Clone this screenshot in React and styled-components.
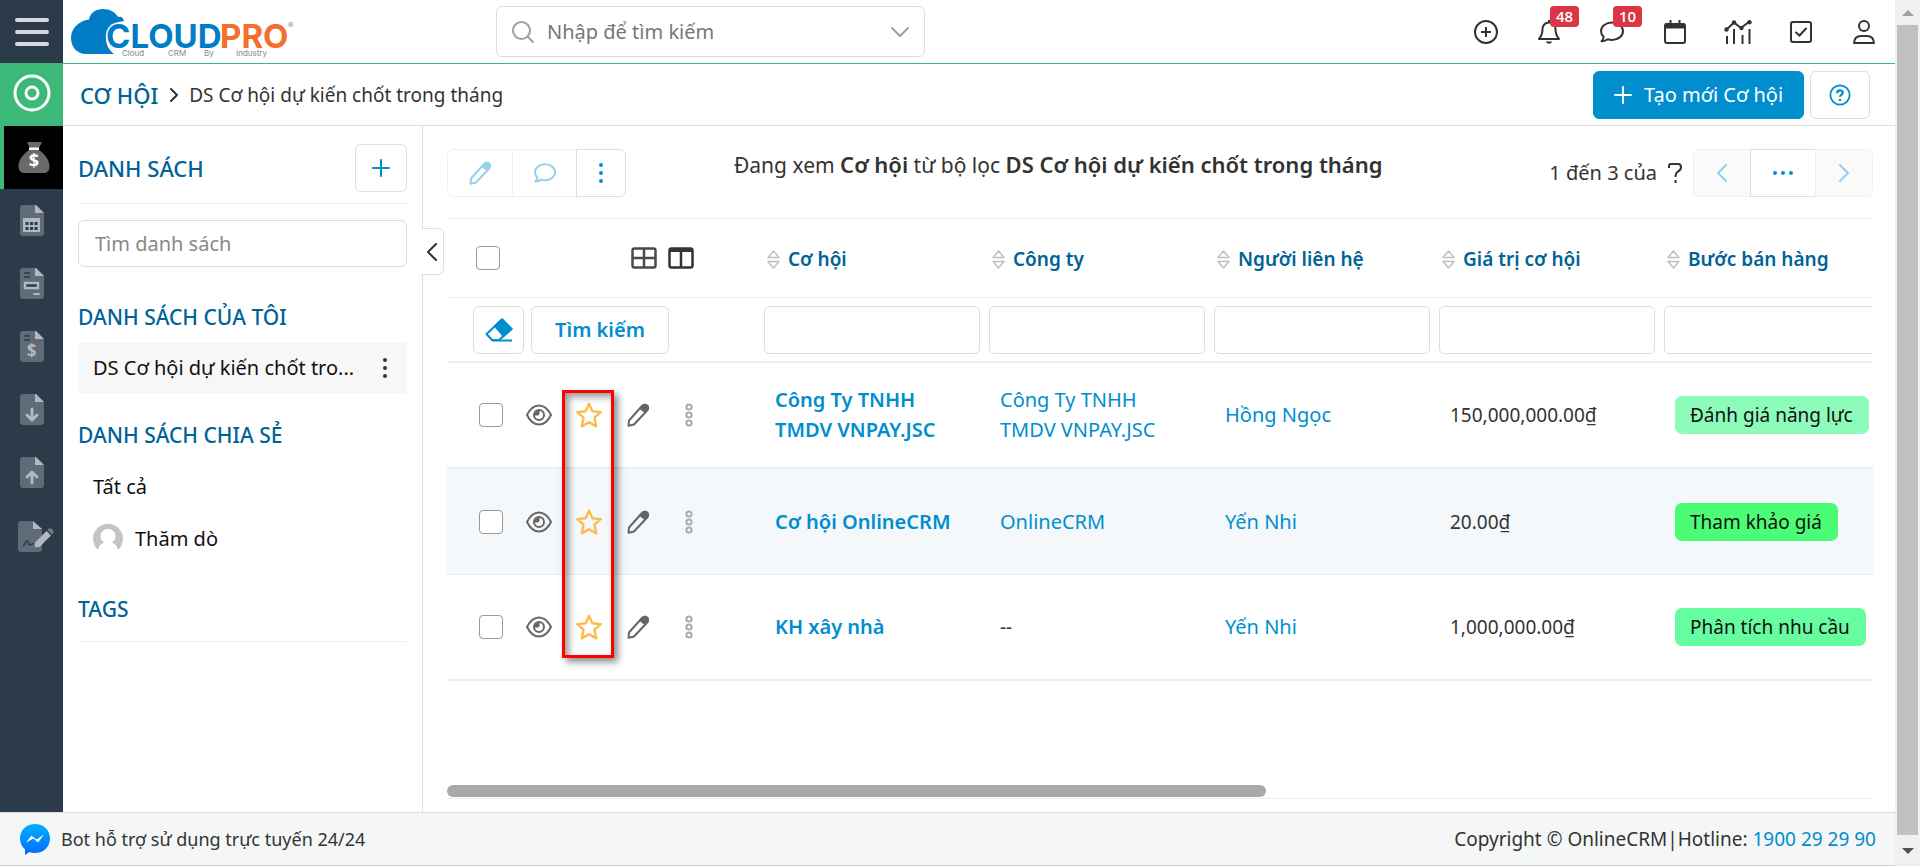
import React from 'react';
import styled, { createGlobalStyle, css } from 'styled-components';

const c = {
  blue: '#008ecf', navy: '#006296', text: '#333', line: '#ddd', soft: '#eee',
  green: '#3cb878', side: '#2c3b49', muted: '#888',
};

const Global = createGlobalStyle`
  *, *::before, *::after { box-sizing: border-box; }
  body { margin: 0; background: #fff; color: ${c.text}; font: 400 19px/30px "Noto Sans", "Open Sans", sans-serif; }
  button, input { font: inherit; color: inherit; margin: 0; }
  button { cursor: pointer; padding: 0; }
  a { text-decoration: none; color: ${c.blue}; }
  svg { display: block; flex: none; }
`;

const Window = styled.div`display: grid; grid-template-columns: minmax(0, 1fr) 25px; min-height: 100vh;`;
const Page = styled.div`display: flex; flex-direction: column; min-width: 0;`;
const Body = styled.div`display: flex; flex: 1; min-width: 0;`;
const Column = styled.div`display: flex; flex-direction: column; flex: 1; min-width: 0;`;

/* module rail */
const Rail = styled.nav`width: 63px; flex: none; background: ${c.side}; display: flex; flex-direction: column;`;
const RailButton = styled.button`
  height: 63px; border: 0; width: 100%; display: flex; align-items: center; justify-content: center;
  background: ${p => p.$bg || 'transparent'};
  ${p => p.$raised && css`padding-bottom: 4px;`}
  ${p => p.$wide && css`padding-left: 8px;`}
  ${p => p.$active && css`border-left: 4px solid ${c.green};`}
`;

/* top bar */
const Topbar = styled.header`height: 64px; flex: none; display: flex; align-items: center; border-bottom: 1px solid ${c.green};`;
const Brand = styled.a`width: 433px; padding-left: 7px;`;
const SearchBox = styled.label`
  width: 429px; height: 51px; border: 1px solid ${c.line}; border-radius: 6px; display: flex; align-items: center;
  gap: 12px; padding: 0 14px; color: #a0a0a0;
`;
const SearchInput = styled.input`
  flex: 1; min-width: 0; border: 0; outline: 0; background: none; padding: 0; font-size: 20px;
  &::placeholder { color: #777; opacity: 1; }
`;
const TopActions = styled.div`display: flex; margin-left: auto;`;
const TopButton = styled.button`
  position: relative; width: 63px; height: 63px; border: 0; background: none; color: ${c.text};
  display: flex; align-items: center; justify-content: center;
`;
const Badge = styled.span`
  position: absolute; top: 6px; left: 33px; min-width: 29px; height: 21px; border-radius: 4px; background: #dc3545; color: #fff;
  font: 600 15px/20px "Open Sans", sans-serif; text-align: center;
`;

/* breadcrumb */
const CrumbBar = styled.div`
  height: 62px; flex: none; display: flex; align-items: center; border-bottom: 1px solid ${c.line}; padding: 0 25px 0 17px;
`;
const CrumbModule = styled.h1`margin: 0; font-size: 22px; font-weight: 500; color: ${c.navy};`;
const CrumbArrow = styled.span`margin: 0 10px 0 11px;`;
const CrumbActions = styled.div`display: flex; gap: 6px; margin-left: auto;`;
const Button = styled.button`
  height: 48px; width: ${p => p.$w}px; border-radius: 6px; border: 1px solid ${c.line}; background: #fff; color: ${c.blue};
  display: flex; align-items: center; justify-content: center; gap: 12px; font-weight: ${p => p.$weight || 400}; font-size: 20px;
  ${p => p.$primary && css`background: ${c.blue}; border-color: ${c.blue}; color: #fff;`}
`;

/* list panel */
const Content = styled.div`display: flex; flex: 1; min-width: 0;`;
const Lists = styled.aside`
  position: relative; width: 360px; flex: none; border-right: 1px solid ${c.line}; padding: 18px 15px 16px; font-size: 20px;
`;
const ListsHead = styled.div`
  display: flex; align-items: center; justify-content: space-between; height: 60px; padding-bottom: 11px; border-bottom: 1px solid ${c.soft};
`;
const PanelTitle = styled.h2`margin: 0; font-size: 22px; font-weight: 500; color: ${c.navy};`;
const ListSearch = styled.input`
  display: block; width: 100%; height: 47px; margin-top: 16px; border: 1px solid ${c.line}; border-radius: 6px; padding: 0 16px;
  &::placeholder { color: #888; opacity: 1; }
`;
const GroupTitle = styled.h3`
  margin: ${p => p.$top || 34}px 0 0; font-size: 21px; line-height: 32px; font-weight: 500; color: ${c.navy};
  ${p => p.$ruled && css`padding-bottom: 16px; border-bottom: 1px solid ${c.soft};`}
`;
const ListLinks = styled.ul`list-style: none; margin: ${p => p.$top}px 0 0; padding: 0;`;
const ListRow = styled.li`
  display: flex; align-items: center; height: ${p => p.$h}px; padding: 0 14px 0 15px; background: ${p => (p.$on ? '#f7f7f7' : 'none')};
`;
const ListLink = styled.a`color: #111; white-space: nowrap;`;
const PlainButton = styled.button`
  border: 0; background: none; min-width: 16px; margin-left: ${p => (p.$push ? 'auto' : 0)}; color: ${p => p.$color || c.text};
  display: flex; align-items: center; justify-content: center;
`;
const Avatar = styled.span`margin-right: 12px;`;
const Collapse = styled.button`
  position: absolute; left: 359px; top: 102px; width: 22px; height: 47px; padding-right: 2px; background: #fff; border: 1px solid ${c.line}; border-left: 0;
  border-radius: 0 6px 6px 0; display: flex; align-items: center; justify-content: center;
`;

/* record list */
const Main = styled.main`flex: 1; min-width: 0; padding: 23px 22px 13px 24px; display: flex; flex-direction: column;`;
const Toolbar = styled.div`display: flex; align-items: flex-start; height: 69px;`;
const Group = styled.div`display: flex; height: 48px;`;
const GroupButton = styled.button`
  width: ${p => p.$w}px; height: 48px; background: ${p => p.$bg || '#fff'}; color: ${c.blue}; display: flex; align-items: center; justify-content: center;
  border: 1px solid ${p => (p.disabled ? '#f0f0f0' : c.line)};
  & + & { margin-left: -1px; }
  &:first-child { border-radius: 6px 0 0 6px; }
  &:last-child { border-radius: 0 6px 6px 0; }
  svg { opacity: ${p => (p.disabled ? 0.4 : 1)}; }
`;
const ViewTitle = styled.p`
  margin: 0 0 0 108px; flex: 1; line-height: 30px; font-size: 21px; white-space: nowrap;
  b { font-weight: 600; font-size: 22px; }
`;
const Pager = styled.div`display: flex; gap: 11px;`;
const Count = styled.span`font-size: 20px; line-height: 48px; display: flex; gap: 11px; align-items: center; white-space: nowrap;`;

const TableArea = styled.div`position: relative; overflow: hidden; border-top: 1px solid ${c.soft};`;
const Table = styled.table`width: 1437px; table-layout: fixed; border-collapse: separate; border-spacing: 0;`;
const HeadCell = styled.th`height: 79px; padding: 0 8px; text-align: left; border-bottom: 1px solid ${c.soft}; font-weight: 600; color: ${c.navy};`;
const FilterCell = styled.td`height: 65px; padding: 0 4px 0 5px; border-bottom: 2px solid ${c.soft};`;
const Row = styled.tr`background: ${p => (p.$on ? '#f4f8fb' : '#fff')};`;
const Cell = styled.td`
  height: 106px; padding: 0 16px; border-bottom: ${p => (p.$on ? 1 : 2)}px solid ${c.soft};
  a { display: block; width: 180px; font-size: 20px; font-weight: ${p => (p.$strong ? 600 : 400)}; }
`;
const Sort = styled.button`
  border: 0; background: none; display: flex; align-items: center; gap: 8px; margin-top: 2px; font-weight: 600; font-size: 19px;
  line-height: 30px; white-space: nowrap;
`;
const Tools = styled.div`display: flex; align-items: center; padding-left: ${p => p.$left}px; gap: ${p => p.$gap || 0}px;`;
const Check = styled.input`
  appearance: none; width: 24px; height: 24px; border: 1px solid #999; border-radius: 4px; background: #fff; flex: none;
  &:checked { background: ${c.blue}; }
`;
const HeadIcons = styled.span`display: flex; gap: 11px; margin-left: 131px; color: ${c.text};`;
const RowIcon = styled(PlainButton)`width: ${p => p.$w}px; height: 30px;`;
const FilterInput = styled.input`display: block; width: 100%; height: 48px; border: 1px solid ${c.line}; border-radius: 5px; padding: 0 10px;`;
const Stage = styled.span`
  display: inline-block; height: 38px; line-height: 38px; padding: 0 16px 0 15px; border-radius: 7px; white-space: nowrap;
  color: #111; background: ${p => p.$bg};
`;
const Highlight = styled.div`
  position: absolute; left: 115px; top: 171px; width: 52px; height: 268px; border: 3px solid #f00; pointer-events: none;
  box-shadow: 4px 4px 7px rgba(0,0,0,.45), inset 4px 4px 7px rgba(0,0,0,.4);
`;
const Track = styled.div`margin-top: auto; padding-bottom: 1px; border-bottom: 1px solid ${c.soft};`;
const Thumb = styled.div`width: 57.4%; height: 12px; border-radius: 6px; background: #a9a9a9;`;

/* footer and window scroll bar */
const Footer = styled.footer`
  height: 54px; flex: none; background: #f5f7f7; border-top: 1px solid ${c.line}; border-bottom: 1px solid #d0d0d0;
  display: flex; align-items: center; padding: 0 19px 0 20px; gap: 11px; font-size: 18px;
`;
const Copyright = styled.span`margin-left: auto; font-size: 19px;`;
const WinScroll = styled.div`
  background: #f0f0f0; padding: 0 2px; display: flex; flex-direction: column; align-items: center; color: #a0a0a0;
`;
const WinArrow = styled.div`height: ${p => p.$h}px; display: flex; align-items: center; justify-content: center; color: ${p => p.$color};`;
const WinThumb = styled.div`flex: 1; width: 100%; background: #c1c1c1;`;

/* icons */
const Svg = ({ w = 24, h = w, vb = '0 0 24 24', sw = 2, fill = 'none', children, ...rest }) => (
  <svg width={w} height={h} viewBox={vb} fill={fill} stroke="currentColor" strokeWidth={sw} aria-hidden="true" {...rest}>{children}</svg>
);
const Plus = ({ s = 18, sw = 2 }) => <Svg w={s} vb="0 0 18 18" sw={sw} strokeLinecap="round"><path d="M9 1v16M1 9h16" /></Svg>;
const Chevron = ({ d, w = 12, h = 20, sw = 2 }) => <Svg w={w} h={h} vb={`0 0 ${w} ${h}`} sw={sw} strokeLinecap="round" strokeLinejoin="round"><path d={d} /></Svg>;
const Dots = ({ across }) => (
  <Svg w={across ? 22 : 6} h={across ? 6 : 22} vb={across ? '0 0 22 6' : '0 0 6 22'} fill="currentColor" sw={0}>
    {[3, 11, 19].map(n => <circle key={n} cx={across ? n : 3} cy={across ? 3 : n} r="2" />)}
  </Svg>
);
const Bubble = ({ s = 24 }) => (
  <Svg w={s} sw={s < 24 ? 2.2 : 2} strokeLinejoin="round"><path d="M12 2.500c6.100 0 11 3.800 11 8.700s-4.900 8.700-11 8.700c-1.600 0-3-.2-4.300-.7C6 20.400 4 21.300 1.500 21.300c1-1 2-2.700 2.200-4.500C2 15.300 1 13.300 1 11.200c0-4.900 4.900-8.700 11-8.700z" /></Svg>
);
const Pencil = () => (
  <Svg w={22} h={24} vb="0 0 22 24" strokeLinejoin="round">
    <path d="M2 17.500 15 3c1.500-1.600 4-1.500 5.200-.3 1.200 1.300 1 3.500-.3 5L7 21.500l-5.500 1.300z" />
    <path d="M13.500 5.500 16 2.500c3-2 6 1 4.500 4L18 9z" fill="currentColor" />
  </Svg>
);
const Eye = () => (
  <Svg w={26} h={22} vb="0 0 26 22" sw={2}>
    <path d="M1 11C4 5 8 1.500 13 1.500S22 5 25 11c-3 6-7 9.500-12 9.500S4 17 1 11z" />
    <circle cx="13" cy="11" r="5" /><path d="M13.500 6.500v3c0 1.300-.8 2-2 2h-3c0-3 2-5 5-5z" fill="currentColor" stroke="none" />
  </Svg>
);
const Star = () => <Svg w={26} h={26} sw={2.2} strokeLinejoin="round"><path d="m12 1.500 3.100 7 7.700.8-5.800 5.100 1.700 8.100L12 18.700l-6.700 3.800L7 14.400 1.200 9.300l7.700-.8z" /></Svg>;
const Rings = () => <Svg w={8} h={24} vb="0 0 8 24" sw={2}>{[4, 12, 20].map(y => <circle key={y} cx="4" cy={y} r="2.600" />)}</Svg>;
const SortIcon = () => <Svg w={13} h={19} vb="0 0 13 19" sw={1.5} stroke="#c0c0c0" strokeLinejoin="round"><path d="M1 7.500h11L6.500 1zM1 11.500h11L6.500 18z" /></Svg>;

const TopIcons = [
  ['Tạo nhanh', null, <Svg w={24}><circle cx="12" cy="12" r="11" /><path d="M12 7v10M7 12h10" /></Svg>],
  ['Thông báo', '48', <Svg w={22} h={24} vb="0 0 22 24" strokeLinejoin="round"><path d="M11 2.500c-4 0-6.500 3-6.500 6.500 0 5-1 7-3.500 10h20c-2.500-3-3.500-5-3.500-10 0-3.500-2.500-6.500-6.500-6.500zM11 0v3" /><path d="M8 21.500h6c-.5 3-5.500 3-6 0z" fill="currentColor" stroke="none" /></Svg>],
  ['Tin nhắn', '10', <Bubble />],
  ['Lịch', null, <Svg w={22} h={24} vb="0 0 22 24"><rect x="1" y="4" width="20" height="19" rx="2" /><path d="M1 3.500h20v5H1z" fill="currentColor" stroke="none" /><path d="M6.500 0v5M15.500 0v5" /></Svg>],
  ['Báo cáo', null, <Svg w={28} h={24} vb="0 0 28 24"><path d="M2.500 9.500 10 2.500l7 5.500 9-7M3 16v8M10 9v15M18.500 15v9M25.500 9v15" /><g fill="currentColor" stroke="none"><circle cx="2.500" cy="9.500" r="2.200" /><circle cx="10" cy="2.500" r="2.200" /><circle cx="17.500" cy="8" r="2.200" /><circle cx="25.500" cy="2.200" r="2.200" /></g></Svg>],
  ['Công việc', null, <Svg w={22} vb="0 0 22 22"><rect x="1" y="1" width="20" height="20" rx="2" /><path d="m5.500 11 4 3.500 7-7.500" /></Svg>],
  ['Tài khoản', null, <Svg w={22} h={24} vb="0 0 22 24"><circle cx="11" cy="6" r="5" /><path d="M1 23c.3-4.500 3-7 7-7h6c4 0 6.700 2.500 7 7z" strokeLinejoin="round" /></Svg>],
];

const Doc = ({ children, lines }) => (
  <svg width="24" height="31" viewBox="0 0 24 31" aria-hidden="true">
    <path d="M3 0h13l8 8v20a3 3 0 0 1-3 3H3a3 3 0 0 1-3-3V3a3 3 0 0 1 3-3z" fill="#5f6b76" />
    <path d="M15 0h1l8 8h-9z" fill="#b2b8be" />
    {lines && <path d="M4 5h6M4 9h6" stroke={c.side} strokeWidth="1.500" />}
    <g fill="none" stroke="#b2b8be" strokeWidth="3" strokeLinecap="round" strokeLinejoin="round">{children}</g>
  </svg>
);
const dollar = { fontFamily: '"Open Sans", sans-serif', fontWeight: 700, textAnchor: 'middle', stroke: 'none' };
const RailIcons = [
  ['Báo giá', <Doc><path d="M3 13h17v14H3z" fill="#b2b8be" stroke="none" /><path d="M5.500 18.500h12M5.500 23.500h12" stroke={c.side} strokeLinecap="butt" strokeDasharray="3 1.500" /></Doc>],
  ['Đơn hàng', <Doc lines><path d="M5 15h13v5H5z" strokeWidth="2.500" strokeLinejoin="miter" fill={c.side} /><path d="M14 26h5" strokeWidth="2" /></Doc>],
  ['Hóa đơn', <Doc lines><text x="11.500" y="26" fontSize="17" fill="#b2b8be" {...dollar}>$</text></Doc>],
  ['Nhập kho', <Doc><path d="M12 15v11M7 21l5 5 5-5" /></Doc>],
  ['Xuất kho', <Doc><path d="M12 26V15M7 20l5-5 5 5" /></Doc>],
  ['Hợp đồng', (
    <svg width="36" height="32" viewBox="0 0 36 32" aria-hidden="true">
      <path d="M3 1h12l9 8v20a3 3 0 0 1-3 3H3a3 3 0 0 1-3-3V4a3 3 0 0 1 3-3z" fill="#5f6b76" /><path d="M15 1l9 8h-9z" fill="#b2b8be" />
      <path d="M5 26c2 0 2-5 4-5s1 4 3 4 2-2 4-1" fill="none" stroke={c.side} strokeWidth="1.500" />
      <path d="M17 22.500 28.500 11l4.500 4.500L22 26.500c-1.500 1-3.500 1-5 .5-.5-1.500-.5-3 0-4.500z" fill="#b2b8be" /><path d="m29.500 10 1.500-1.500c2-1 5.500 2 4.500 4.500L34 14.500z" fill="#6d7882" />
    </svg>), true],
];

const columns = ['Cơ hội', 'Công ty', 'Người liên hệ', 'Giá trị cơ hội', 'Bước bán hàng'];
const records = [
  ['Công Ty TNHH TMDV VNPAY.JSC', 'Công Ty TNHH TMDV VNPAY.JSC', 'Hồng Ngọc', '150,000,000.00₫', 'Đánh giá năng lực', '#8dfbb9'],
  ['Cơ hội OnlineCRM', 'OnlineCRM', 'Yến Nhi', '20.00₫', 'Tham khảo giá', '#4bfd75'],
  ['KH xây nhà', null, 'Yến Nhi', '1,000,000.00₫', 'Phân tích nhu cầu', '#66fca0'],
];

const Logo = () => (
  <svg width="226" height="54" viewBox="0 0 226 54" role="img" aria-label="CloudPro">
    <path d="M16 49C7 49 1 42 1 33S8 16 19 14.500C20 8 26 4 33 4c7 0 12 3 15 8 3-1 5 0 6 4-11 1-18 8-18 17 0 7 3 12 8 16z" fill="#007dc5" />
    <g fontFamily="Inter, sans-serif" fontWeight="700" fontSize="33">
      <text x="36" y="43" fill="#007dc5" stroke="#fff" strokeWidth="3" paintOrder="stroke">CLOUD</text>
      <text x="150" y="43" fill="#f36f2b">PRO</text>
    </g>
    <g fontFamily="Inter, sans-serif" fontSize="8" fill="#888">
      <text y="51"><tspan x="52">Cloud</tspan><tspan x="98">CRM</tspan><tspan x="134">By</tspan><tspan x="166">Industry</tspan></text>
      <text x="218" y="23">®</text>
    </g>
  </svg>
);

export default function App() {
  return (
    <>
      <Global />
      <Window>
        <Page>
          <Body>
            <Rail aria-label="Phân hệ">
              <RailButton aria-label="Menu"><Svg w={34} h={28} vb="0 0 34 28" sw={4} stroke="#d5d8db" strokeLinecap="round"><path d="M2 2h30M2 14h30M2 26h30" /></Svg></RailButton>
              <RailButton $bg={c.green} $raised aria-label="Bán hàng"><Svg w={38} vb="0 0 38 38" sw={3} stroke="#fff"><circle cx="19" cy="19" r="17" /><circle cx="19" cy="19" r="6" /></Svg></RailButton>
              <RailButton $bg="#000" $active aria-label="Cơ hội">
                <svg width="32" height="31" viewBox="0 0 32 31" aria-hidden="true">
                  <path d="M9 0h15l-3 6h-9zM11 8h10c6 4 11 11 10.500 17-.3 4-2.500 6-6 6h-19C3 31 1 29 .5 25 0 19 5 12 11 8z" fill="#6a6a6a" />
                  <path d="M11 5.500h10v2.500H11z" fill="#fff" /><text x="16" y="25" fontSize="18" fill="#fff" {...dollar}>$</text>
                </svg>
              </RailButton>
              {RailIcons.map(([label, icon, wide]) => <RailButton key={label} $wide={wide} aria-label={label}>{icon}</RailButton>)}
            </Rail>
            <Column>
              <Topbar>
                <Brand href="#"><Logo /></Brand>
                <SearchBox>
                  <Svg w={24}><circle cx="10.500" cy="10.500" r="8.500" /><path d="m16.500 16.500 6 6" /></Svg>
                  <SearchInput placeholder="Nhập để tìm kiếm" aria-label="Tìm kiếm" />
                  <Chevron w={20} h={12} sw={2} d="M2 2l8 8 8-8" />
                </SearchBox>
                <TopActions>
                  {TopIcons.map(([label, badge, icon]) => (
                    <TopButton key={label} aria-label={label}>{icon}{badge && <Badge>{badge}</Badge>}</TopButton>
                  ))}
                </TopActions>
              </Topbar>
              <CrumbBar>
                <CrumbModule>CƠ HỘI</CrumbModule>
                <CrumbArrow><Chevron w={10} h={14} d="M2 1l6 6-6 6" /></CrumbArrow>
                <span>DS Cơ hội dự kiến chốt trong tháng</span>
                <CrumbActions>
                  <Button $w={211} $primary><Plus />Tạo mới Cơ hội</Button>
                  <Button $w={60} aria-label="Trợ giúp"><Svg w={22}><circle cx="12" cy="12" r="10.500" /><path d="M9 10c0-4 6-4 6-.5 0 2-3 2.500-3 4.500M12 16v2.500" strokeWidth="2.500" /></Svg></Button>
                </CrumbActions>
              </CrumbBar>
              <Content>
                <Lists>
                  <ListsHead><PanelTitle>DANH SÁCH</PanelTitle><Button $w={52} aria-label="Thêm danh sách"><Plus /></Button></ListsHead>
                  <ListSearch placeholder="Tìm danh sách" aria-label="Tìm danh sách" />
                  <GroupTitle>DANH SÁCH CỦA TÔI</GroupTitle>
                  <ListLinks $top={10}>
                    <ListRow $h={50} $on><ListLink href="#">DS Cơ hội dự kiến chốt tro...</ListLink><PlainButton $push aria-label="Thao tác"><Dots /></PlainButton></ListRow>
                  </ListLinks>
                  <GroupTitle $top={26}>DANH SÁCH CHIA SẺ</GroupTitle>
                  <ListLinks $top={10}>
                    <ListRow $h={52}><ListLink href="#">Tất cả</ListLink></ListRow>
                    <ListRow $h={52}>
                      <Avatar><svg width="30" height="30" viewBox="0 0 30 30" aria-hidden="true"><path d="M5 26a15 15 0 1 1 20 0c-.5-4-3-6-6-7.500a7.500 7.500 0 1 0-8 0C8 20 5.500 22 5 26z" fill="#c4c4c4" /></svg></Avatar>
                      <ListLink href="#">Thăm dò</ListLink>
                    </ListRow>
                  </ListLinks>
                  <GroupTitle $top={28} $ruled>TAGS</GroupTitle>
                  <Collapse aria-label="Thu gọn"><Chevron w={12} h={20} d="M10 2L2 10l8 8" /></Collapse>
                </Lists>
                <Main>
                  <Toolbar>
                    <Group>
                      <GroupButton $w={66} disabled aria-label="Sửa"><Pencil /></GroupButton>
                      <GroupButton $w={65} disabled aria-label="Bình luận"><Bubble s={22} /></GroupButton>
                      <GroupButton $w={50} aria-label="Thêm"><Dots /></GroupButton>
                    </Group>
                    <ViewTitle>Đang xem <b>Cơ hội</b> từ bộ lọc <b>DS Cơ hội dự kiến chốt trong tháng</b></ViewTitle>
                    <Pager>
                      <Count>1 đến 3 của <Svg w={14} h={20} vb="0 0 14 20"><path d="M1 5V3q0-2 2-2h7q3 0 3 3 0 3-3 4.500-2.500 1.500-2.500 5.500M7.500 17v3" /></Svg></Count>
                      <Group>
                        <GroupButton $w={58} $bg="#fafafa" disabled aria-label="Trang trước"><Chevron d="M10 2L2 10l8 8" /></GroupButton>
                        <GroupButton $w={66} aria-label="Chọn trang"><Dots across /></GroupButton>
                        <GroupButton $w={58} $bg="#fafafa" disabled aria-label="Trang sau"><Chevron d="M2 2l8 8-8 8" /></GroupButton>
                      </Group>
                    </Pager>
                  </Toolbar>
                  <TableArea>
                    <Table>
                      <colgroup><col width="312" />{columns.map(x => <col key={x} width="225" />)}</colgroup>
                      <thead>
                        <tr>
                          <HeadCell>
                            <Tools $left={21}>
                              <Check type="checkbox" aria-label="Chọn tất cả" />
                              <HeadIcons>
                                <Svg w={26} h={22} vb="0 0 26 22" sw={2.5} stroke="#4a4a4a"><rect x="1.500" y="1.500" width="23" height="19" rx="2" /><path d="M13 1v20M1 11h24" /></Svg>
                                <Svg w={26} h={22} vb="0 0 26 22" sw={2.5}><rect x="1.500" y="1.500" width="23" height="19" rx="2" /><path d="M13 4v17" /><path d="M1 1h24v4H1z" fill="currentColor" stroke="none" /></Svg>
                              </HeadIcons>
                            </Tools>
                          </HeadCell>
                          {columns.map(x => <HeadCell key={x}><Sort><SortIcon />{x}</Sort></HeadCell>)}
                        </tr>
                        <tr>
                          <FilterCell>
                            <Tools $left={21} $gap={7}>
                              <Button $w={51} aria-label="Xóa bộ lọc"><Svg w={28} h={24} vb="0 0 28 24"><path d="M1.500 16 17 1.500l9.500 9.500L14 22H7z" strokeLinejoin="round" /><path d="m10 8 7-6.500 9.500 9.500-8 7z" fill="currentColor" /><path d="M7 22.500h20" /></Svg></Button>
                              <Button $w={138} $weight={600}>Tìm kiếm</Button>
                            </Tools>
                          </FilterCell>
                          {columns.map(x => <FilterCell key={x}><FilterInput aria-label={x} /></FilterCell>)}
                        </tr>
                      </thead>
                      <tbody>
                        {records.map(([name, company, contact, value, stage, color], i) => {
                          const on = i === 1;
                          return (
                            <Row key={name} $on={on}>
                              <Cell $on={on}>
                                <Tools $left={16}>
                                  <Check type="checkbox" aria-label={'Chọn ' + name} />
                                  <RowIcon $w={72} $color="#666" aria-label="Xem"><Eye /></RowIcon>
                                  <RowIcon $w={28} $color="#fdbb4c" aria-label="Đánh dấu sao"><Star /></RowIcon>
                                  <RowIcon $w={70} $color="#666" aria-label="Sửa"><Pencil /></RowIcon>
                                  <RowIcon $w={32} $color="#aaa" aria-label="Thao tác khác"><Rings /></RowIcon>
                                </Tools>
                              </Cell>
                              <Cell $on={on} $strong><a href="#">{name}</a></Cell>
                              <Cell $on={on}>{company ? <a href="#">{company}</a> : '--'}</Cell>
                              <Cell $on={on}><a href="#">{contact}</a></Cell>
                              <Cell $on={on}>{value}</Cell>
                              <Cell $on={on}><Stage $bg={color}>{stage}</Stage></Cell>
                            </Row>
                          );
                        })}
                      </tbody>
                    </Table>
                    <Highlight />
                  </TableArea>
                  <Track><Thumb /></Track>
                </Main>
              </Content>
            </Column>
          </Body>
          <Footer>
            <svg width="30" height="31" viewBox="0 0 30 31" aria-hidden="true">
              <defs><linearGradient id="messenger" x2="0" y2="1"><stop stopColor="#00b2ff" /><stop offset="1" stopColor="#006aff" /></linearGradient></defs>
              <path d="M15 0C6.500 0 0 6 0 14.500 0 19 2 23 5 25.500V31l4.500-3c2 .8 3.500 1 5.500 1 8.500 0 15-6 15-14.500S23.500 0 15 0z" fill="url(#messenger)" />
              <path d="m6 18.500 5.500-7 5 4 7.500-5-6 8-4.500-4z" fill="#fff" />
            </svg>
            <span>Bot hỗ trợ sử dụng trực tuyến 24/24</span>
            <Copyright>Copyright © OnlineCRM|Hotline: <a href="tel:1900292990">1900 29 29 90</a></Copyright>
          </Footer>
        </Page>
        <WinScroll aria-hidden="true">
          <WinArrow $h={25} $color="#a0a0a0"><Svg w={12} h={6} vb="0 0 12 6" fill="currentColor" sw={0}><path d="M0 6 6 0l6 6z" /></Svg></WinArrow>
          <WinThumb />
          <WinArrow $h={31} $color="#505050"><Svg w={12} h={6} vb="0 0 12 6" fill="currentColor" sw={0}><path d="M0 0l6 6 6-6z" /></Svg></WinArrow>
        </WinScroll>
      </Window>
    </>
  );
}
